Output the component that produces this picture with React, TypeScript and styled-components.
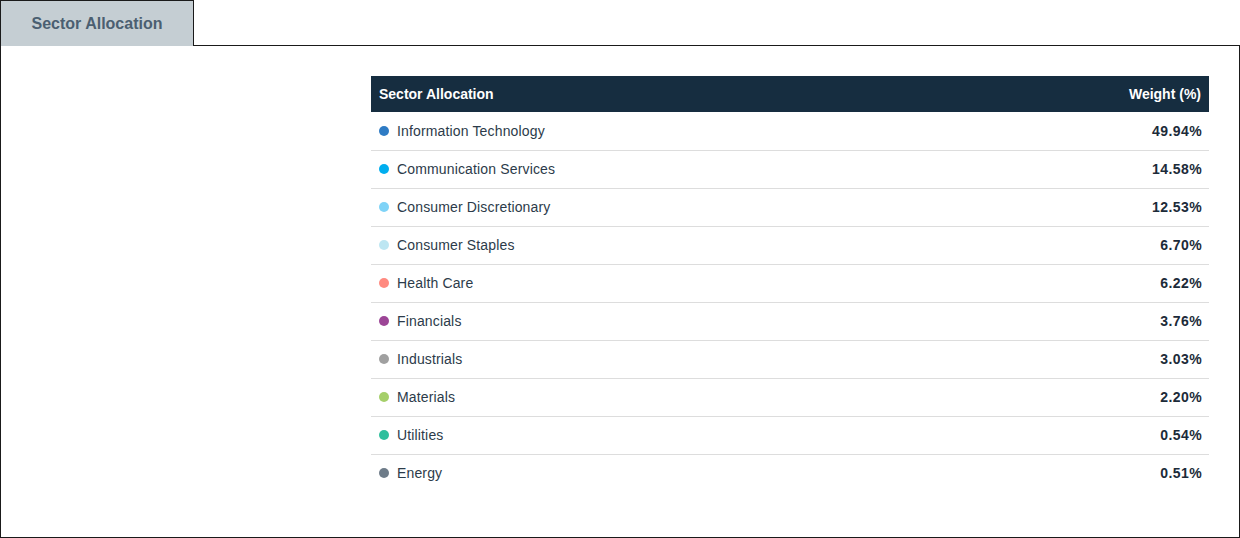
import styled, { createGlobalStyle } from 'styled-components';

const GlobalStyle = createGlobalStyle`
    html, body {
        margin: 0;
        padding: 0;
        background: #ffffff;
        font-family: "Liberation Sans", Arial, sans-serif;
    }
`

const sectors = [
    { name: 'Information Technology', weight: '49.94%', color: '#2e7bc4' },
    { name: 'Communication Services', weight: '14.58%', color: '#00aeef' },
    { name: 'Consumer Discretionary', weight: '12.53%', color: '#7fd3f7' },
    { name: 'Consumer Staples', weight: '6.70%', color: '#bde6f2' },
    { name: 'Health Care', weight: '6.22%', color: '#ff8a80' },
    { name: 'Financials', weight: '3.76%', color: '#9c4596' },
    { name: 'Industrials', weight: '3.03%', color: '#a0a0a0' },
    { name: 'Materials', weight: '2.20%', color: '#a5cf6a' },
    { name: 'Utilities', weight: '0.54%', color: '#2fbf9d' },
    { name: 'Energy', weight: '0.51%', color: '#6e7c89' },
];

const StyledPage = styled.div`
    width: 1240px;
    height: 538px;
    display: flex;
    flex-direction: column;
    box-sizing: border-box;
`

const StyledTabs = styled.div`
    display: flex;
    position: relative;
    z-index: 1;
    margin-bottom: -1px;
`

const StyledTab = styled.div`
    width: 194px;
    height: 46px;
    box-sizing: border-box;
    background-color: #c5ced3;
    border: 1px solid #1a1a1a;
    border-bottom: none;
    display: flex;
    align-items: center;
    justify-content: center;
    padding-top: 1px;
    color: #4b5f71;
    font-size: 16px;
    font-weight: bold;
`

const StyledPanel = styled.div`
    flex: 1;
    border: 1px solid #1a1a1a;
    padding: 30px 30px 0 370px;
`

const StyledTable = styled.table`
    width: 100%;
    border-collapse: collapse;
    font-size: 14px;
    color: #2c3b4a;
`

const StyledHeadCell = styled.th<{ $align?: string }>`
    background-color: #162d40;
    color: #ffffff;
    height: 36px;
    padding: 0 8px;
    font-size: 14px;
    font-weight: bold;
    text-align: ${props => props.$align || 'left'};
`

const StyledRow = styled.tr`
    height: 38px;
    border-bottom: 1px solid #dddddd;

    &:last-child {
        border-bottom: none;
    }
`

const StyledCell = styled.td<{ $align?: string }>`
    padding: ${props => props.$align === 'right' ? '0 7px 0 8px' : '0 8px'};
    text-align: ${props => props.$align || 'left'};
    font-weight: ${props => props.$align === 'right' ? 'bold' : 'normal'};
    color: ${props => props.$align === 'right' ? '#1c2b39' : '#2c3b4a'};
    letter-spacing: ${props => props.$align === 'right' ? '0.4px' : '0.15px'};
`

const StyledLabel = styled.span`
    display: flex;
    align-items: center;
    gap: 8px;
`

const StyledDot = styled.span<{ $color: string }>`
    width: 10px;
    height: 10px;
    border-radius: 50%;
    background-color: ${props => props.$color};
    flex-shrink: 0;
`

export default function App() {
    return (
        <StyledPage>
            <GlobalStyle />
            <StyledTabs>
                <StyledTab>Sector Allocation</StyledTab>
            </StyledTabs>
            <StyledPanel>
                <StyledTable>
                    <thead>
                        <tr>
                            <StyledHeadCell>Sector Allocation</StyledHeadCell>
                            <StyledHeadCell $align="right">Weight (%)</StyledHeadCell>
                        </tr>
                    </thead>
                    <tbody>
                        {sectors.map(sector => (
                            <StyledRow key={sector.name}>
                                <StyledCell>
                                    <StyledLabel>
                                        <StyledDot $color={sector.color} />
                                        {sector.name}
                                    </StyledLabel>
                                </StyledCell>
                                <StyledCell $align="right">{sector.weight}</StyledCell>
                            </StyledRow>
                        ))}
                    </tbody>
                </StyledTable>
            </StyledPanel>
        </StyledPage>
    )
}
